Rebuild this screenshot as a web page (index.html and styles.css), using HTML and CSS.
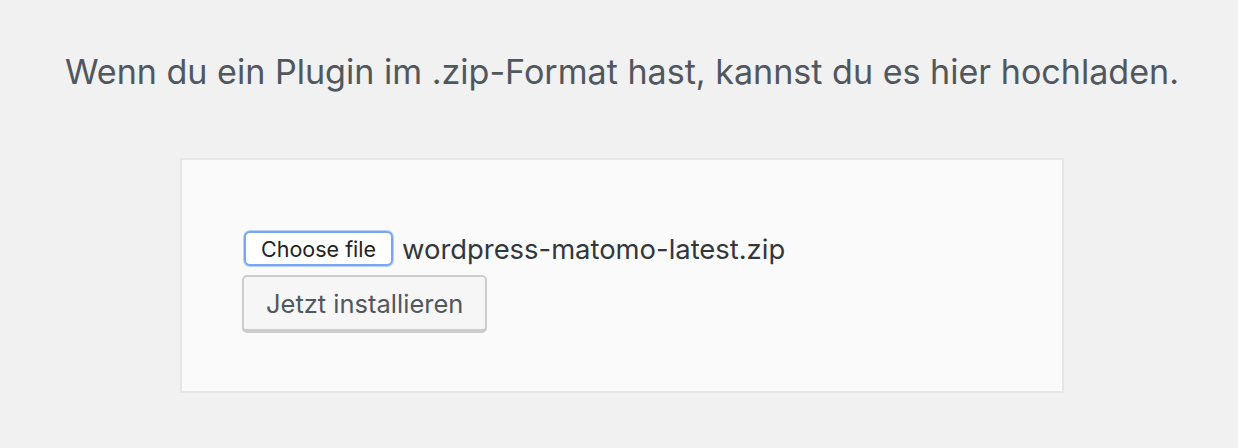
FILE: index.html
```html
<!DOCTYPE html>
<html lang="de">

<head>
  <meta charset="UTF-8">
  <meta name="viewport" content="width=device-width, initial-scale=1.0">
  <title>Plugin hochladen</title>
  <link rel="stylesheet" href="styles.css">
</head>

<body>
  <p class="install-help">Wenn du ein Plugin im .zip-Format hast, kannst du es hier hochladen.</p>

  <form class="upload-form">
    <div class="file-row">
      <label class="file-button">
        <input type="file" id="pluginzip" accept=".zip">
        Choose file
      </label>
      <span class="file-name">wordpress-matomo-latest.zip</span>
    </div>
    <button type="button" class="install-button">Jetzt installieren</button>
  </form>
</body>

</html>
```

FILE: styles.css
```css
body {
  margin: 0;
  padding: 0;
  background-color: #f1f1f1;
  font-family: Inter, Roboto, "Noto Sans", sans-serif;
}

.install-help {
  margin: 0;
  padding-top: 50px;
  padding-left: 6px;
  text-align: center;
  font-size: 34.1px;
  line-height: 44px;
  color: #50575e;
}

.upload-form {
  width: 884px;
  margin: 64px 0 0 180px;
  padding: 71px 0 58px 60px;
  box-sizing: border-box;
  background-color: #fafafa;
  border: 2px solid #e6e6e6;
  display: flex;
  flex-direction: column;
  align-items: flex-start;
  gap: 9px;
}

.file-row {
  display: flex;
  align-items: center;
  gap: 9px;
  margin-left: 2px;
}

input[type="file"] {
  display: none;
}

.file-button {
  display: inline-block;
  height: 35px;
  box-sizing: border-box;
  padding: 0 15px;
  line-height: 32px;
  font-size: 21.5px;
  color: #222;
  background-color: #fff;
  border: 2px solid #78a6f0;
  border-radius: 6px;
  box-shadow: 0 0 0 1px #b9d1f7;
  cursor: pointer;
}

.file-name {
  font-size: 27.4px;
  color: #32373c;
}

.install-button {
  height: 58px;
  padding: 0 22px;
  font-family: inherit;
  font-size: 25.5px;
  color: #50575e;
  background-color: #f6f6f6;
  border: 2px solid #cccccc;
  border-bottom-width: 4px;
  border-radius: 5px;
  cursor: pointer;
}
```
